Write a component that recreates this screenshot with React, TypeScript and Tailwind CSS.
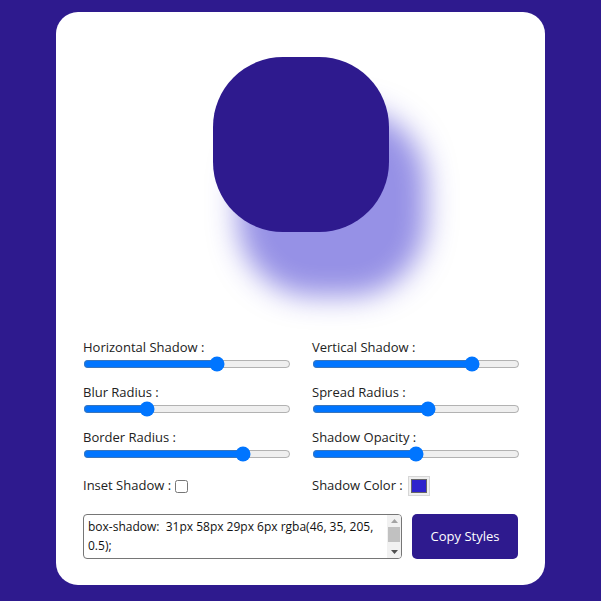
import { useState } from 'react'

const FONT = { fontFamily: '"Open Sans", "DejaVu Sans", sans-serif' }

interface SliderProps {
  label: string
  min: number
  max: number
  step?: number
  value: number
  onChange: (v: number) => void
}

function Slider({ label, min, max, step = 1, value, onChange }: SliderProps) {
  return (
    <div className="flex flex-col">
      <label className="text-[13px] leading-[18px] text-[#222]">{label}</label>
      <input
        type="range"
        min={min}
        max={max}
        step={step}
        value={value}
        onChange={e => onChange(Number(e.target.value))}
        className="w-[calc(100%+2px)] h-4 m-0"
      />
    </div>
  )
}

export default function App() {
  const [h, setH] = useState(31)
  const [v, setV] = useState(58)
  const [blur, setBlur] = useState(29)
  const [spread, setSpread] = useState(6)
  const [radius, setRadius] = useState(79)
  const [opacity, setOpacity] = useState(0.5)
  const [inset, setInset] = useState(false)

  const shadow = `${inset ? 'inset ' : ''}${h}px ${v}px ${blur}px ${spread}px rgba(46, 35, 205, ${opacity})`
  const br = Math.round(radius * 0.89)
  const css = `box-shadow:  ${shadow};\n-webkit-box-shadow:  ${shadow};\nborder-radius: ${br}px;`

  return (
    <div className="min-h-screen bg-[#2e1a8e] pt-3" style={FONT}>
      <div className="w-[489px] h-[573px] bg-white rounded-[22px] mx-auto px-[27px] pt-[45px]">
        <div
          className="w-[176px] h-[175px] mx-auto bg-[#2e1a8e]"
          style={{ boxShadow: shadow, borderRadius: br }}
        />

        <div className="grid grid-cols-2 gap-x-[23px] gap-y-[11px] mt-[106px]">
          <Slider label="Horizontal Shadow :" min={-100} max={100} value={h} onChange={setH} />
          <Slider label="Vertical Shadow :" min={-100} max={100} value={v} onChange={setV} />
          <Slider label="Blur Radius :" min={0} max={100} value={blur} onChange={setBlur} />
          <Slider label="Spread Radius :" min={-50} max={50} value={spread} onChange={setSpread} />
          <Slider label="Border Radius :" min={0} max={100} value={radius} onChange={setRadius} />
          <Slider label="Shadow Opacity :" min={0} max={1} step={0.1} value={opacity} onChange={setOpacity} />

          <div className="flex items-center h-[22px] mt-[2px] gap-1 text-[13px] text-[#222]">
            <span>Inset Shadow :</span>
            <input type="checkbox" checked={inset} onChange={e => setInset(e.target.checked)} className="m-0" />
          </div>
          <div className="flex items-center h-[22px] mt-[2px] gap-[5px] text-[13px] text-[#222]">
            <span>Shadow Color :</span>
            <div className="w-[22px] h-[20px] bg-[#efefef] border border-[#d6d6d6] p-[2px]">
              <div className="w-full h-full bg-[#2e23cd] border border-[#666]" />
            </div>
          </div>
        </div>

        <div className="flex gap-[10px] mt-[17px]">
          <div className="w-[319px] h-[45px] flex border border-[#767676] rounded-[4px] overflow-hidden">
            <textarea
              readOnly
              value={css}
              className="flex-1 h-full pl-[4px] pr-0 py-[2px] text-[12px] leading-[19px] text-[#111] resize-none overflow-hidden outline-none"
              style={FONT}
            />
            {/* scrollbar */}
            <div className="w-[14px] h-full bg-[#f1f1f1] flex flex-col items-center">
              <div className="h-[12px] flex items-center justify-center">
                <svg width="7" height="4" viewBox="0 0 7 4"><path d="M3.5 0L7 4H0z" fill="#a3a3a3" /></svg>
              </div>
              <div className="w-[12px] h-[15px] bg-[#c1c1c1]" />
              <div className="flex-1" />
              <div className="h-[12px] flex items-center justify-center">
                <svg width="7" height="4" viewBox="0 0 7 4"><path d="M0 0H7L3.5 4z" fill="#505050" /></svg>
              </div>
            </div>
          </div>
          <button className="w-[106px] h-[45px] bg-[#2e1a8e] text-white text-[13px] rounded-[5px]">
            Copy Styles
          </button>
        </div>
      </div>
    </div>
  )
}
